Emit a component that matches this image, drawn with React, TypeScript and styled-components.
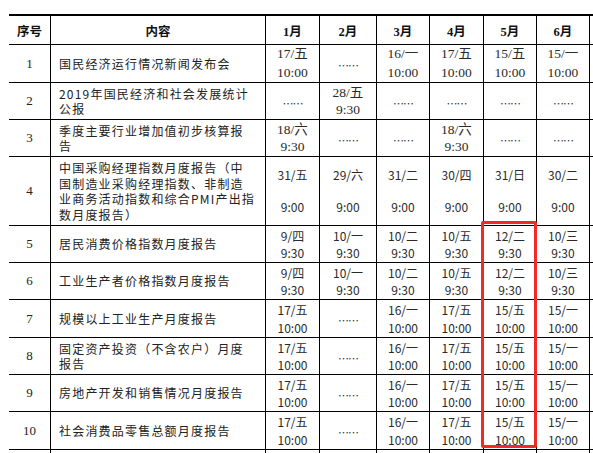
import React from "react";
import styled, { createGlobalStyle } from "styled-components";

const GlobalStyle = createGlobalStyle`
  html, body {
    margin: 0;
    padding: 0;
    overflow: hidden;
    background: #ffffff;
  }
  body {
    font-family: "Noto Sans CJK SC", sans-serif;
    color: #222;
  }
`;

const Page = styled.div`
  padding: 14px 0 0 9px;
`;

const Frame = styled.div`
  position: relative;
  width: max-content;
`;

const Table = styled.table`
  border-collapse: separate;
  border-spacing: 0;
  table-layout: fixed;
  width: 641px;
`;

const HeadCell = styled.th<{ $w: number }>`
  box-sizing: border-box;
  width: ${(p) => p.$w}px;
  height: 31px;
  padding: 0;
  border-top: 2px solid #000;
  border-bottom: 1px solid #000;
  border-right: ${(p) => (p.$w === 60 ? "none" : "1px solid #000")};
  font-family: "Liberation Serif", "Noto Sans CJK SC", serif;
  font-weight: bold;
  font-size: 12.5px;
  color: #111;
  text-align: center;
  vertical-align: middle;
  white-space: nowrap;
`;

const Row = styled.tr<{ $h: number }>`
  & > td {
    height: ${(p) => p.$h}px;
  }
`;

const Cell = styled.td`
  box-sizing: border-box;
  padding: 0;
  border-bottom: 1px solid #000;
  border-right: 1px solid #000;
  vertical-align: middle;
  text-align: center;
`;

const NoCell = styled(Cell)`
  font-family: "Liberation Serif", serif;
  font-size: 13px;
  color: #222;
`;

const TitleCell = styled(Cell)`
  text-align: left;
  padding: 0 4px 0 8px;
  font-family: "Noto Sans CJK SC", sans-serif;
  font-size: 12px;
  letter-spacing: 1.2px;
  line-height: 15.5px;
  color: #222;
`;

const TitleLine = styled.div`
  white-space: nowrap;
`;

const DateCell = styled(Cell)<{ $serif: boolean; $lh: number }>`
  font-family: ${(p) =>
    p.$serif
      ? `"Liberation Serif", "Noto Sans CJK SC", serif`
      : `"Noto Sans CJK SC", sans-serif`};
  font-size: ${(p) => (p.$serif ? "13.5px" : "12px")};
  line-height: ${(p) => p.$lh}px;
  color: #2a2a2a;
  white-space: nowrap;
`;

const DateLine = styled.div`
  min-height: 1px;
`;

const Dots = styled.span`
  font-family: "Noto Sans CJK SC", sans-serif;
  font-size: 11px;
  letter-spacing: -1px;
  color: #333;
  position: relative;
  top: 2px;
`;

const EmptyCell = styled.td`
  box-sizing: border-box;
  padding: 0;
  border-bottom: 1px solid #000;
`;

const Highlight = styled.div`
  position: absolute;
  left: 472px;
  top: 207px;
  width: 56px;
  height: 227px;
  box-sizing: border-box;
  border: 3px solid #f22a26;
  border-radius: 2px;
  pointer-events: none;
`;

type DateVal = string[] | null;

interface RowData {
  no: string;
  title: string[];
  dates: DateVal[];
  h: number;
  serif: boolean;
  lh: number;
}

const widths = [42, 215, 54, 57, 53, 54, 53, 53, 60];
const heads = ["序号", "内容", "1月", "2月", "3月", "4月", "5月", "6月", ""];

const d10 = (d: string): string[] => [d, "10:00"];
const d930 = (d: string): string[] => [d, "9:30"];
const d9 = (d: string): string[] => [d, "", "9:00"];

const monthlyStd: DateVal[] = [
  d10("17/五"),
  null,
  d10("16/一"),
  d10("17/五"),
  d10("15/五"),
  d10("15/一"),
];

const cpi: DateVal[] = [
  d930("9/四"),
  d930("10/一"),
  d930("10/二"),
  d930("10/五"),
  d930("12/二"),
  d930("10/三"),
];

const rows: RowData[] = [
  {
    no: "1",
    title: ["国民经济运行情况新闻发布会"],
    dates: monthlyStd,
    h: 38,
    serif: true,
    lh: 18.5,
  },
  {
    no: "2",
    title: ["2019年国民经济和社会发展统计", "公报"],
    dates: [null, d930("28/五"), null, null, null, null],
    h: 37,
    serif: true,
    lh: 17,
  },
  {
    no: "3",
    title: ["季度主要行业增加值初步核算报", "告"],
    dates: [d930("18/六"), null, null, d930("18/六"), null, null],
    h: 37,
    serif: true,
    lh: 17,
  },
  {
    no: "4",
    title: [
      "中国采购经理指数月度报告（中",
      "国制造业采购经理指数、非制造",
      "业商务活动指数和综合PMI产出指",
      "数月度报告）",
    ],
    dates: [
      d9("31/五"),
      d9("29/六"),
      d9("31/二"),
      d9("30/四"),
      d9("31/日"),
      d9("30/二"),
    ],
    h: 69,
    serif: false,
    lh: 16,
  },
  {
    no: "5",
    title: ["居民消费价格指数月度报告"],
    dates: cpi,
    h: 37,
    serif: false,
    lh: 17.5,
  },
  {
    no: "6",
    title: ["工业生产者价格指数月度报告"],
    dates: cpi,
    h: 37,
    serif: false,
    lh: 17.5,
  },
  {
    no: "7",
    title: ["规模以上工业生产月度报告"],
    dates: monthlyStd,
    h: 38,
    serif: false,
    lh: 17.5,
  },
  {
    no: "8",
    title: ["固定资产投资（不含农户）月度", "报告"],
    dates: monthlyStd,
    h: 37,
    serif: false,
    lh: 17.5,
  },
  {
    no: "9",
    title: ["房地产开发和销售情况月度报告"],
    dates: monthlyStd,
    h: 37,
    serif: false,
    lh: 17.5,
  },
  {
    no: "10",
    title: ["社会消费品零售总额月度报告"],
    dates: monthlyStd,
    h: 38,
    serif: false,
    lh: 17.5,
  },
];

export default function App() {
  return (
    <>
      <GlobalStyle />
      <Page>
        <Frame>
          <Table>
            <thead>
              <tr>
                {heads.map((h, i) => (
                  <HeadCell key={i} $w={widths[i]}>
                    {h}
                  </HeadCell>
                ))}
              </tr>
            </thead>
            <tbody>
              {rows.map((r) => (
                <Row key={r.no} $h={r.h}>
                  <NoCell>{r.no}</NoCell>
                  <TitleCell>
                    {r.title.map((t, i) => (
                      <TitleLine key={i}>{t}</TitleLine>
                    ))}
                  </TitleCell>
                  {r.dates.map((d, i) => (
                    <DateCell key={i} $serif={r.serif} $lh={r.lh}>
                      {d ? (
                        d.map((line, j) => (
                          <DateLine key={j}>{line || "\u00a0"}</DateLine>
                        ))
                      ) : (
                        <Dots>……</Dots>
                      )}
                    </DateCell>
                  ))}
                  <EmptyCell />
                </Row>
              ))}
              <Row $h={30}>
                <Cell />
                <Cell />
                <Cell />
                <Cell />
                <Cell />
                <Cell />
                <Cell />
                <Cell />
                <EmptyCell />
              </Row>
            </tbody>
          </Table>
          <Highlight />
        </Frame>
      </Page>
    </>
  );
}
